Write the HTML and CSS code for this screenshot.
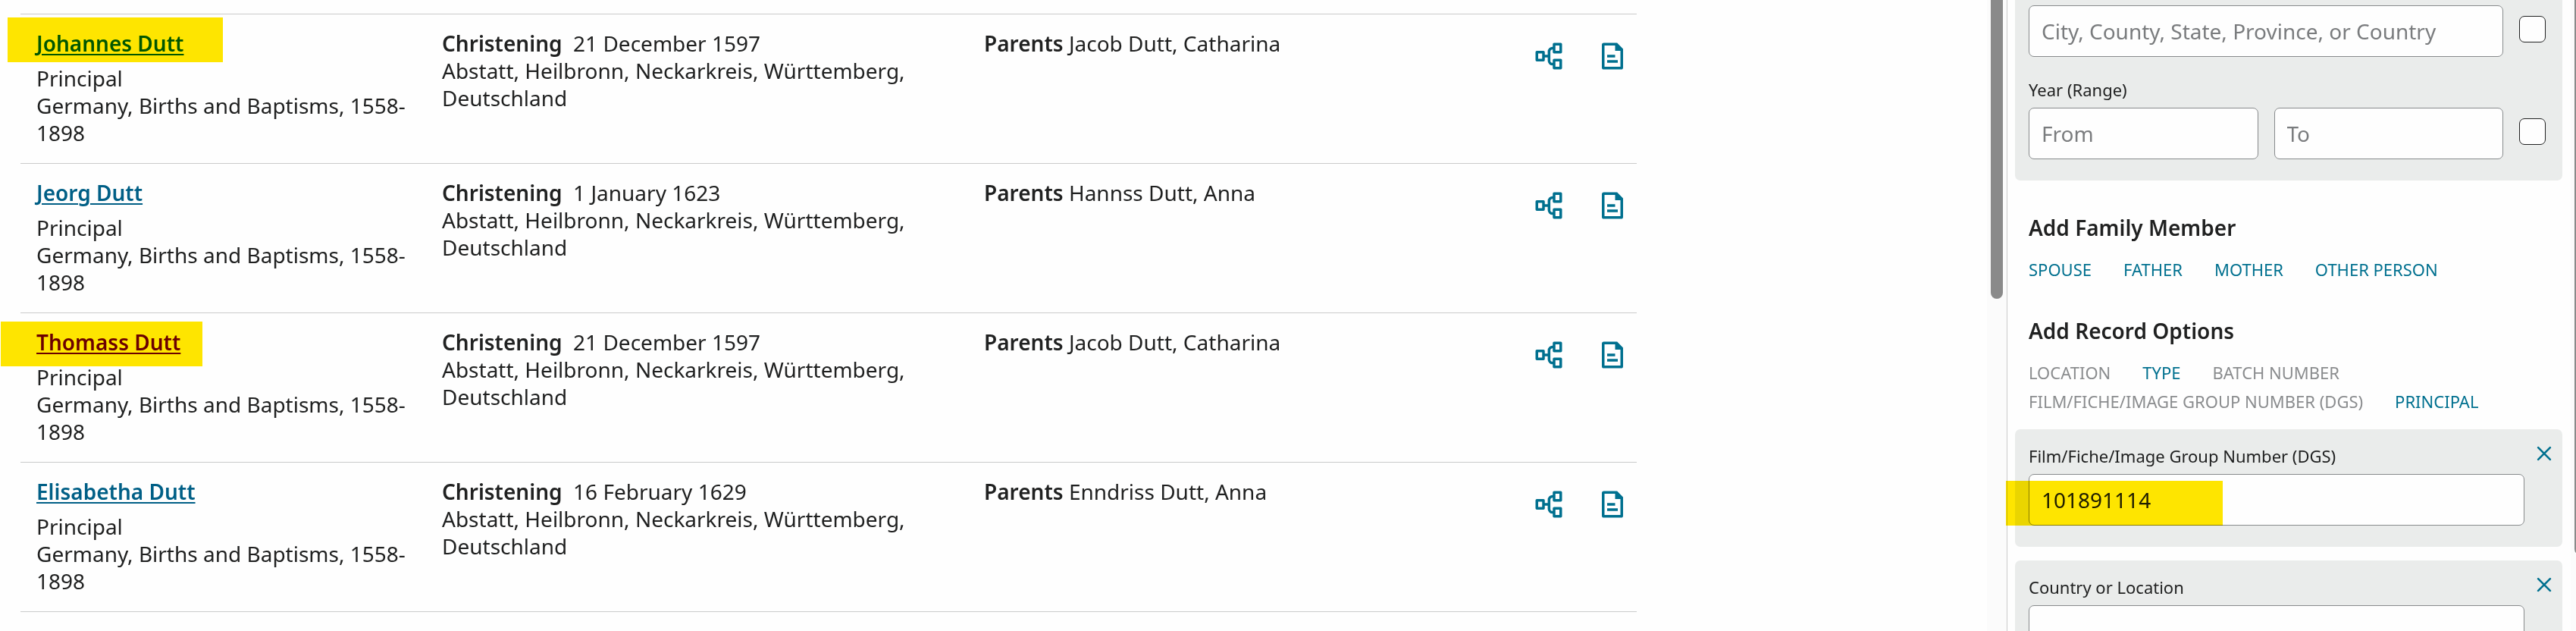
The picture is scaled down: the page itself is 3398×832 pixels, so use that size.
FILE: index.html
```html
<!DOCTYPE html>
<html lang="en">

<head>
  <meta charset="UTF-8" />
  <meta name="viewport" content="width=device-width, initial-scale=1" />
  <title>Search Results</title>
  <link rel="stylesheet" href="styles.css">
</head>

<body>
  <!-- Shared icons -->
  <svg class="sprite" aria-hidden="true">
    <symbol id="icon-tree" viewBox="0 0 24 24">
      <g fill="none" stroke="currentColor" stroke-width="2" stroke-linejoin="round">
        <rect x="3" y="9" width="5" height="6" />
        <rect x="16" y="3" width="5" height="6" />
        <rect x="16" y="15" width="5" height="6" />
        <path d="M8 12h4M16 6h-1.2a2.6 2.6 0 0 0-2.6 2.6v6.8a2.6 2.6 0 0 0 2.6 2.6H16" />
      </g>
    </symbol>
    <symbol id="icon-record" viewBox="0 0 24 24">
      <path fill="currentColor" fill-rule="evenodd" d="M5.5 2H15.5L20 6.5V20.5A1.5 1.5 0 0 1 18.5 22H5.5A1.5 1.5 0 0 1 4 20.5V3.5A1.5 1.5 0 0 1 5.5 2ZM6 4V20H18V8H14V4Z" />
      <path fill="currentColor" d="M8 11h6v2H8zM8 15h8v2H8z" />
    </symbol>
    <symbol id="icon-close" viewBox="0 0 24 24">
      <path d="M7.5 7.5l9 9M16.5 7.5l-9 9" fill="none" stroke="currentColor" stroke-width="1.5" stroke-linecap="round" />
    </symbol>
  </svg>

  <div class="page">
    <main class="results">
      <table class="results-table">
        <colgroup>
          <col class="col-name">
          <col class="col-event">
          <col>
          <col class="col-actions">
        </colgroup>
        <tbody>
          <tr>
            <td>
              <div class="person">
                <a href="#johannes">Johannes Dutt</a>
                <span class="marker marker-johannes"></span>
              </div>
              <div>Principal</div>
              <div>Germany, Births and Baptisms, 1558-1898</div>
            </td>
            <td>
              <div><strong>Christening</strong>&nbsp; 21 December 1597</div>
              <div>Abstatt, Heilbronn, Neckarkreis, Württemberg, Deutschland</div>
            </td>
            <td><strong>Parents</strong> Jacob Dutt, Catharina</td>
            <td>
              <div class="actions">
                <button type="button" class="icon-button" aria-label="View tree"><svg><use href="#icon-tree" /></svg></button>
                <button type="button" class="icon-button" aria-label="View record"><svg><use href="#icon-record" /></svg></button>
              </div>
            </td>
          </tr>
          <tr>
            <td>
              <div class="person"><a href="#jeorg">Jeorg Dutt</a></div>
              <div>Principal</div>
              <div>Germany, Births and Baptisms, 1558-1898</div>
            </td>
            <td>
              <div><strong>Christening</strong>&nbsp; 1 January 1623</div>
              <div>Abstatt, Heilbronn, Neckarkreis, Württemberg, Deutschland</div>
            </td>
            <td><strong>Parents</strong> Hannss Dutt, Anna</td>
            <td>
              <div class="actions">
                <button type="button" class="icon-button" aria-label="View tree"><svg><use href="#icon-tree" /></svg></button>
                <button type="button" class="icon-button" aria-label="View record"><svg><use href="#icon-record" /></svg></button>
              </div>
            </td>
          </tr>
          <tr>
            <td>
              <div class="person">
                <a href="#thomass" class="seen">Thomass Dutt</a>
                <span class="marker marker-thomass"></span>
              </div>
              <div>Principal</div>
              <div>Germany, Births and Baptisms, 1558-1898</div>
            </td>
            <td>
              <div><strong>Christening</strong>&nbsp; 21 December 1597</div>
              <div>Abstatt, Heilbronn, Neckarkreis, Württemberg, Deutschland</div>
            </td>
            <td><strong>Parents</strong> Jacob Dutt, Catharina</td>
            <td>
              <div class="actions">
                <button type="button" class="icon-button" aria-label="View tree"><svg><use href="#icon-tree" /></svg></button>
                <button type="button" class="icon-button" aria-label="View record"><svg><use href="#icon-record" /></svg></button>
              </div>
            </td>
          </tr>
          <tr>
            <td>
              <div class="person"><a href="#elisabetha">Elisabetha Dutt</a></div>
              <div>Principal</div>
              <div>Germany, Births and Baptisms, 1558-1898</div>
            </td>
            <td>
              <div><strong>Christening</strong>&nbsp; 16 February 1629</div>
              <div>Abstatt, Heilbronn, Neckarkreis, Württemberg, Deutschland</div>
            </td>
            <td><strong>Parents</strong> Enndriss Dutt, Anna</td>
            <td>
              <div class="actions">
                <button type="button" class="icon-button" aria-label="View tree"><svg><use href="#icon-tree" /></svg></button>
                <button type="button" class="icon-button" aria-label="View record"><svg><use href="#icon-record" /></svg></button>
              </div>
            </td>
          </tr>
        </tbody>
      </table>
    </main>

    <div class="scrollbar">
      <div class="thumb thumb-results"></div>
    </div>

    <aside class="sidebar">
      <form class="filters">
        <section class="panel panel-first">
          <div class="field-row">
            <input type="text" class="text-input" placeholder="City, County, State, Province, or Country" aria-label="Place" />
            <input type="checkbox" class="exact" aria-label="Exact place" />
          </div>
          <label for="yearFrom" class="year-label">Year (Range)</label>
          <div class="field-row">
            <input type="text" id="yearFrom" class="text-input" placeholder="From" />
            <input type="text" class="text-input" placeholder="To" aria-label="To year" />
            <input type="checkbox" class="exact" aria-label="Exact year" />
          </div>
        </section>

        <h2>Add Family Member</h2>
        <div class="options">
          <button type="button">SPOUSE</button>
          <button type="button">FATHER</button>
          <button type="button">MOTHER</button>
          <button type="button">OTHER PERSON</button>
        </div>

        <h2>Add Record Options</h2>
        <div class="options">
          <button type="button" disabled>LOCATION</button>
          <button type="button">TYPE</button>
          <button type="button" disabled>BATCH NUMBER</button>
          <button type="button" disabled>FILM/FICHE/IMAGE GROUP NUMBER (DGS)</button>
          <button type="button">PRINCIPAL</button>
        </div>

        <section class="panel panel-closable">
          <div class="field">
            <label for="dgs">Film/Fiche/Image Group Number (DGS)</label>
            <input type="text" id="dgs" class="text-input" value="101891114" />
            <span class="marker marker-dgs"></span>
          </div>
          <button type="button" class="icon-button" aria-label="Remove film number"><svg><use href="#icon-close" /></svg></button>
        </section>

        <section class="panel panel-closable">
          <div class="field">
            <label for="country">Country or Location</label>
            <input type="text" id="country" class="text-input" />
          </div>
          <button type="button" class="icon-button" aria-label="Remove country"><svg><use href="#icon-close" /></svg></button>
        </section>
      </form>

      <div class="scrollbar scrollbar-edge">
        <div class="thumb thumb-filters"></div>
      </div>
    </aside>
  </div>
</body>

</html>
```
FILE: styles.css
```css
* {
  box-sizing: border-box;
}

body {
  margin: 0;
  font-family: "Noto Sans", sans-serif;
  font-size: 28px;
  line-height: 36px;
  color: #202121;
  background-color: #fefefe;
}

input,
button {
  font: inherit;
  margin: 0;
}

.sprite {
  display: none;
}

.page {
  display: flex;
  height: 100vh;
  overflow: hidden;
}

/* Results */
.results {
  flex: 1;
  min-width: 0;
  padding: 18px 462px 0 27px;
}

.results-table {
  width: 100%;
  table-layout: fixed;
  border-spacing: 0;
}

.col-name {
  width: 535px;
}

.col-event {
  width: 715px;
}

.col-actions {
  width: 180px;
}

.results-table td {
  padding: 20px 21px 22px;
  vertical-align: top;
  border-top: 1px solid #cacbcb;
}

.results-table tr:last-child td {
  border-bottom: 1px solid #cacbcb;
}

.results-table td:last-child {
  padding-left: 0;
  padding-right: 11px;
}

strong {
  font-weight: 600;
}

.person {
  position: relative;
  margin-bottom: 10px;
}

.person a {
  color: #005f86;
  font-weight: 600;
  text-decoration-thickness: 2px;
  text-underline-offset: 3px;
}

.person a.seen {
  color: #6b0060;
}

.actions {
  display: flex;
  justify-content: flex-end;
  gap: 42px;
  padding-top: 14px;
}

.icon-button {
  width: 42px;
  height: 42px;
  padding: 0;
  border: none;
  background: none;
  color: #00708f;
  cursor: pointer;
}

.icon-button svg {
  display: block;
  width: 100%;
  height: 100%;
}

/* Highlighter strokes lie over the text */
.marker {
  position: absolute;
  height: 59px;
  background-color: #ffe600;
  mix-blend-mode: multiply;
  pointer-events: none;
}

.marker-johannes {
  left: -38px;
  top: -16px;
  width: 284px;
}

.marker-thomass {
  left: -47px;
  top: -9px;
  width: 266px;
}

.marker-dgs {
  left: -30px;
  bottom: 0;
  width: 286px;
}

/* Scrollbars */
.scrollbar {
  flex: none;
  width: 26px;
  padding-left: 5px;
  overflow: hidden;
  background-color: #fbfbfb;
}

.scrollbar-edge {
  width: 7px;
}

.thumb {
  width: 16px;
  background-color: #8a8a8a;
  border-radius: 0 0 8px 8px;
}

.thumb-results {
  height: 394px;
}

.thumb-filters {
  height: 732px;
}

/* Filters */
.sidebar {
  flex: none;
  display: flex;
  width: 751px;
  border-left: 1px solid #cacbcb;
}

.filters {
  flex: 1;
  min-width: 0;
  padding: 0 11px 0 10px;
}

.panel {
  margin-bottom: 18px;
  padding: 20px 22px 28px 18px;
  border-radius: 7px;
  background-color: #eaeceb;
}

.panel-first {
  margin-bottom: 0;
  padding-top: 7px;
  border-radius: 0 0 7px 7px;
}

.panel-closable {
  display: flex;
  gap: 5px;
  padding-right: 3px;
}

.panel-closable .icon-button {
  margin-top: -9px;
}

.field {
  position: relative;
  flex: 1;
}

.field-row {
  display: flex;
  gap: 21px;
}

label {
  display: block;
  margin-bottom: 9px;
  font-size: 22px;
  line-height: 30px;
}

.year-label {
  margin-top: 28px;
}

.text-input {
  width: 100%;
  min-width: 0;
  height: 68px;
  padding: 0 16px;
  border: 1px solid #878a8c;
  border-radius: 7px;
  color: #202121;
  background-color: #fefefe;
}

.text-input::placeholder {
  color: #7a7c7e;
}

.exact {
  flex: none;
  appearance: none;
  width: 35px;
  height: 35px;
  margin-top: 14px;
  border: 1px solid #202121;
  border-radius: 7px;
  background-color: #fefefe;
}

h2 {
  margin: 44px 18px 18px;
  font-size: 28px;
  line-height: 36px;
  font-weight: 600;
}

.options {
  display: flex;
  flex-wrap: wrap;
  column-gap: 42px;
  margin: 0 18px 18px;
}

.options button {
  padding: 0;
  border: none;
  background: none;
  color: #00708f;
  font-size: 22px;
  line-height: 38px;
  cursor: pointer;
}

.options button:disabled {
  color: #8a8c8e;
  cursor: default;
}
```
